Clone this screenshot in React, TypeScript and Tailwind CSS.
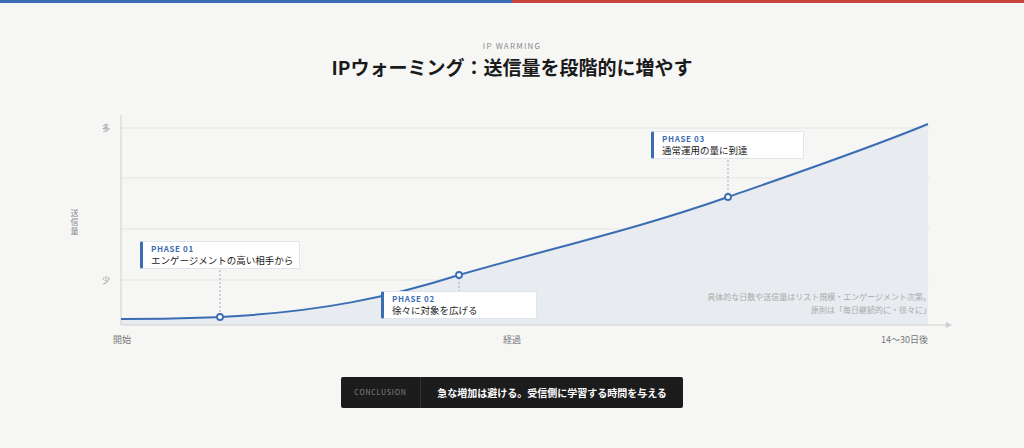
const font = { fontFamily: '"Noto Sans CJK JP", "Noto Sans", sans-serif' };

const CURVE =
  "M121,319 C170,319 190,318 220,317 C320,312 390,297 459,275 C560,246 640,228 728,197 C800,172 870,148 928,124";

function Callout({ x, y, w, phase, text }: { x: number; y: number; w: number; phase: string; text: string }) {
  return (
    <div
      className="absolute h-[28px] bg-white border border-[#dfe5ee] border-l-[3px] border-l-[#3b6db3] rounded-[2px] pl-[8px] flex flex-col justify-center"
      style={{ left: x, top: y, width: w }}
    >
      <span className="text-[8px] font-bold tracking-[0.08em] text-[#3b6db3] leading-[10px]">{phase}</span>
      <span className="text-[9.5px] text-[#222] leading-[13px]">{text}</span>
    </div>
  );
}

export default function App() {
  return (
    <div className="w-[1024px] h-[448px] bg-[#f6f6f5] overflow-hidden flex flex-col" style={font}>
      <div className="flex h-[3px]">
        <div className="flex-1 bg-[#3b6db3]" />
        <div className="flex-1 bg-[#c9453a]" />
      </div>

      {/* Header */}
      <div className="flex flex-col items-center pt-[38px]">
        <span className="text-[8px] tracking-[0.15em] text-[#8a8a8a] leading-[10px]">IP WARMING</span>
        <h1 className="text-[19px] font-bold text-[#1a1a1a] mt-[3px] leading-[26px]">
          IPウォーミング：送信量を段階的に増やす
        </h1>
      </div>

      {/* Chart canvas */}
      <div className="relative h-[297px]">
        <svg width="1024" height="297" viewBox="0 80 1024 297" className="absolute left-0 top-0">
          {[128, 178, 229, 280].map((y) => (
            <line key={y} x1="121" x2="930" y1={y} y2={y} stroke="#e4e4e2" strokeWidth="1" />
          ))}
          <path d={`${CURVE} L928,325 L121,325 Z`} fill="#e8ebef" />
          <line x1="121" y1="115" x2="121" y2="325" stroke="#cfcfcf" />
          <line x1="121" y1="325" x2="948" y2="325" stroke="#cfcfcf" />
          <path d="M946,322 L952,325 L946,328 Z" fill="#cfcfcf" />
          <path d={CURVE} fill="none" stroke="#3b6db3" strokeWidth="2" />
          <line x1="220" y1="270" x2="220" y2="314" stroke="#8fb0da" strokeDasharray="2 2" />
          <line x1="459" y1="278" x2="459" y2="291" stroke="#8fb0da" strokeDasharray="2 2" />
          <line x1="728" y1="160" x2="728" y2="194" stroke="#8fb0da" strokeDasharray="2 2" />
          {[
            [220, 317],
            [459, 275],
            [728, 197],
          ].map(([cx, cy]) => (
            <circle key={cx} cx={cx} cy={cy} r="3" fill="#fff" stroke="#3b6db3" strokeWidth="1.8" />
          ))}
        </svg>

        <span className="absolute left-[102px] top-[42px] text-[8px] text-[#999]">多</span>
        <span className="absolute left-[102px] top-[194px] text-[8px] text-[#999]">少</span>
        <span
          className="absolute left-[68px] top-[129px] text-[8px] text-[#888] tracking-[0.1em]"
          style={{ writingMode: "vertical-rl" }}
        >
          送信量
        </span>
        <span className="absolute left-[113px] top-[253px] text-[9px] text-[#777]">開始</span>
        <span className="absolute left-[503px] top-[253px] text-[9px] text-[#777]">経過</span>
        <span className="absolute right-[96px] top-[253px] text-[9px] text-[#777]">14〜30日後</span>
        <div className="absolute right-[93px] top-[210px] text-[8px] leading-[13px] text-[#aaa] text-right">
          <div>具体的な日数や送信量はリスト規模・エンゲージメント次第。</div>
          <div>原則は「毎日継続的に・徐々に」</div>
        </div>

        <Callout x={140} y={161} w={160} phase="PHASE 01" text="エンゲージメントの高い相手から" />
        <Callout x={381} y={211} w={156} phase="PHASE 02" text="徐々に対象を広げる" />
        <Callout x={651} y={51} w={153} phase="PHASE 03" text="通常運用の量に到達" />
      </div>

      {/* Conclusion */}
      <div className="flex justify-center">
        <div className="w-[342px] h-[31px] bg-[#1c1c1c] rounded-[2px] flex">
          <div className="w-[80px] border-r border-[#333] flex items-center justify-center text-[7px] tracking-[0.12em] text-[#888]">
            CONCLUSION
          </div>
          <div className="flex-1 flex items-center justify-center text-[10px] font-bold text-white">
            急な増加は避ける。受信側に学習する時間を与える
          </div>
        </div>
      </div>
    </div>
  );
}
